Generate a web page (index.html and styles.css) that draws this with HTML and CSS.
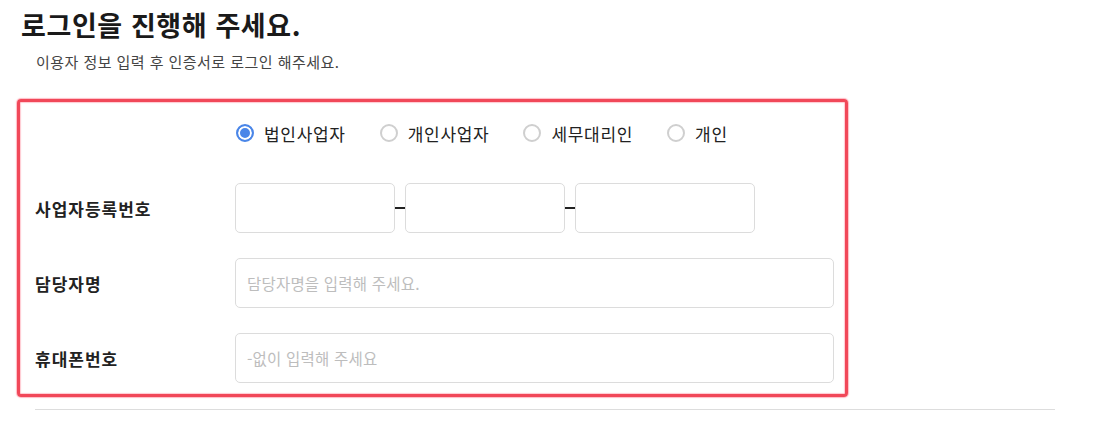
FILE: index.html
```html
<!DOCTYPE html>
<html lang="ko">
<head>
    <meta charset="UTF-8">
    <meta name="viewport" content="width=device-width, initial-scale=1.0">
    <title>로그인</title>
    <link rel="stylesheet" href="styles.css">
</head>
<body>
    <div class="page">
        <h1 class="title">로그인을 진행해 주세요.</h1>
        <p class="subtitle">이용자 정보 입력 후 인증서로 로그인 해주세요.</p>

        <form class="login-form">
            <div class="row">
                <div class="label"></div>
                <div class="radios">
                    <label class="radio"><input type="radio" name="type" checked><span>법인사업자</span></label>
                    <label class="radio"><input type="radio" name="type"><span>개인사업자</span></label>
                    <label class="radio"><input type="radio" name="type"><span>세무대리인</span></label>
                    <label class="radio"><input type="radio" name="type"><span>개인</span></label>
                </div>
            </div>

            <div class="row">
                <div class="label">사업자등록번호</div>
                <div class="biz-number">
                    <input type="text" class="field short">
                    <span class="dash"></span>
                    <input type="text" class="field short">
                    <span class="dash"></span>
                    <input type="text" class="field long">
                </div>
            </div>

            <div class="row">
                <div class="label">담당자명</div>
                <input type="text" class="field wide" placeholder="담당자명을 입력해 주세요.">
            </div>

            <div class="row">
                <div class="label">휴대폰번호</div>
                <input type="text" class="field wide" placeholder="-없이 입력해 주세요">
            </div>
        </form>

        <hr class="divider">
    </div>
</body>
</html>
```

FILE: styles.css
```css
body {
    margin: 0;
    padding: 0;
    background-color: #fff;
    color: #222;
    font-family: "Noto Sans CJK KR", "Noto Sans", sans-serif;
}
.page {
    padding: 6px 0 0 0;
}
.title {
    margin: 0 0 0 21px;
    font-size: 27px;
    font-weight: 700;
    letter-spacing: 0.6px;
    line-height: 38px;
    color: #1a1a1a;
}
.subtitle {
    margin: 8px 0 0 36px;
    font-size: 15px;
    letter-spacing: 0.45px;
    line-height: 20px;
    color: #444;
}
.login-form {
    margin: 27px 0 0 17px;
    width: 831px;
    box-sizing: border-box;
    padding: 6px 11px 11px 15px;
    border: 3px solid rgba(238, 40, 60, 0.85);
    border-radius: 4px;
    box-shadow: 0 0 1px 1px rgba(255, 120, 140, 0.5), inset 0 0 1px 1px rgba(255, 120, 140, 0.4);
    display: flex;
    flex-direction: column;
    gap: 25px;
}
.row {
    display: flex;
    align-items: center;
    min-height: 50px;
}
.label {
    width: 200px;
    flex-shrink: 0;
    font-size: 17px;
    font-weight: 700;
    letter-spacing: 1px;
    color: #222;
}
.radios {
    display: flex;
    align-items: center;
    gap: 34px;
    padding-left: 1px;
}
.radio {
    display: flex;
    align-items: center;
    gap: 10px;
    font-size: 17px;
    letter-spacing: 0.7px;
    color: #222;
    cursor: pointer;
}
.radio input {
    appearance: none;
    -webkit-appearance: none;
    margin: 0;
    width: 18px;
    height: 18px;
    border: 2px solid #cfcfcf;
    border-radius: 50%;
    box-sizing: border-box;
    background: #fff;
}
.radio input:checked {
    border-color: #4a86e8;
    background: #4a86e8;
    box-shadow: inset 0 0 0 2px #fff;
}
.biz-number {
    display: flex;
    align-items: center;
}
.dash {
    width: 10px;
    height: 2px;
    background: #222;
}
.field {
    height: 50px;
    box-sizing: border-box;
    border: 1px solid #dcdcdc;
    border-radius: 5px;
    padding: 0 11px;
    font-family: "Noto Sans CJK KR", "Noto Sans", sans-serif;
    font-size: 15.5px;
    letter-spacing: 0.2px;
    color: #222;
    outline: none;
}
.field::placeholder {
    color: #bdbdbd;
}
.short {
    width: 160px;
}
.long {
    width: 180px;
}
.wide {
    width: 599px;
}
.divider {
    margin: 12px 0 0 35px;
    width: 1020px;
    border: none;
    border-top: 1px solid #ddd;
}
```
